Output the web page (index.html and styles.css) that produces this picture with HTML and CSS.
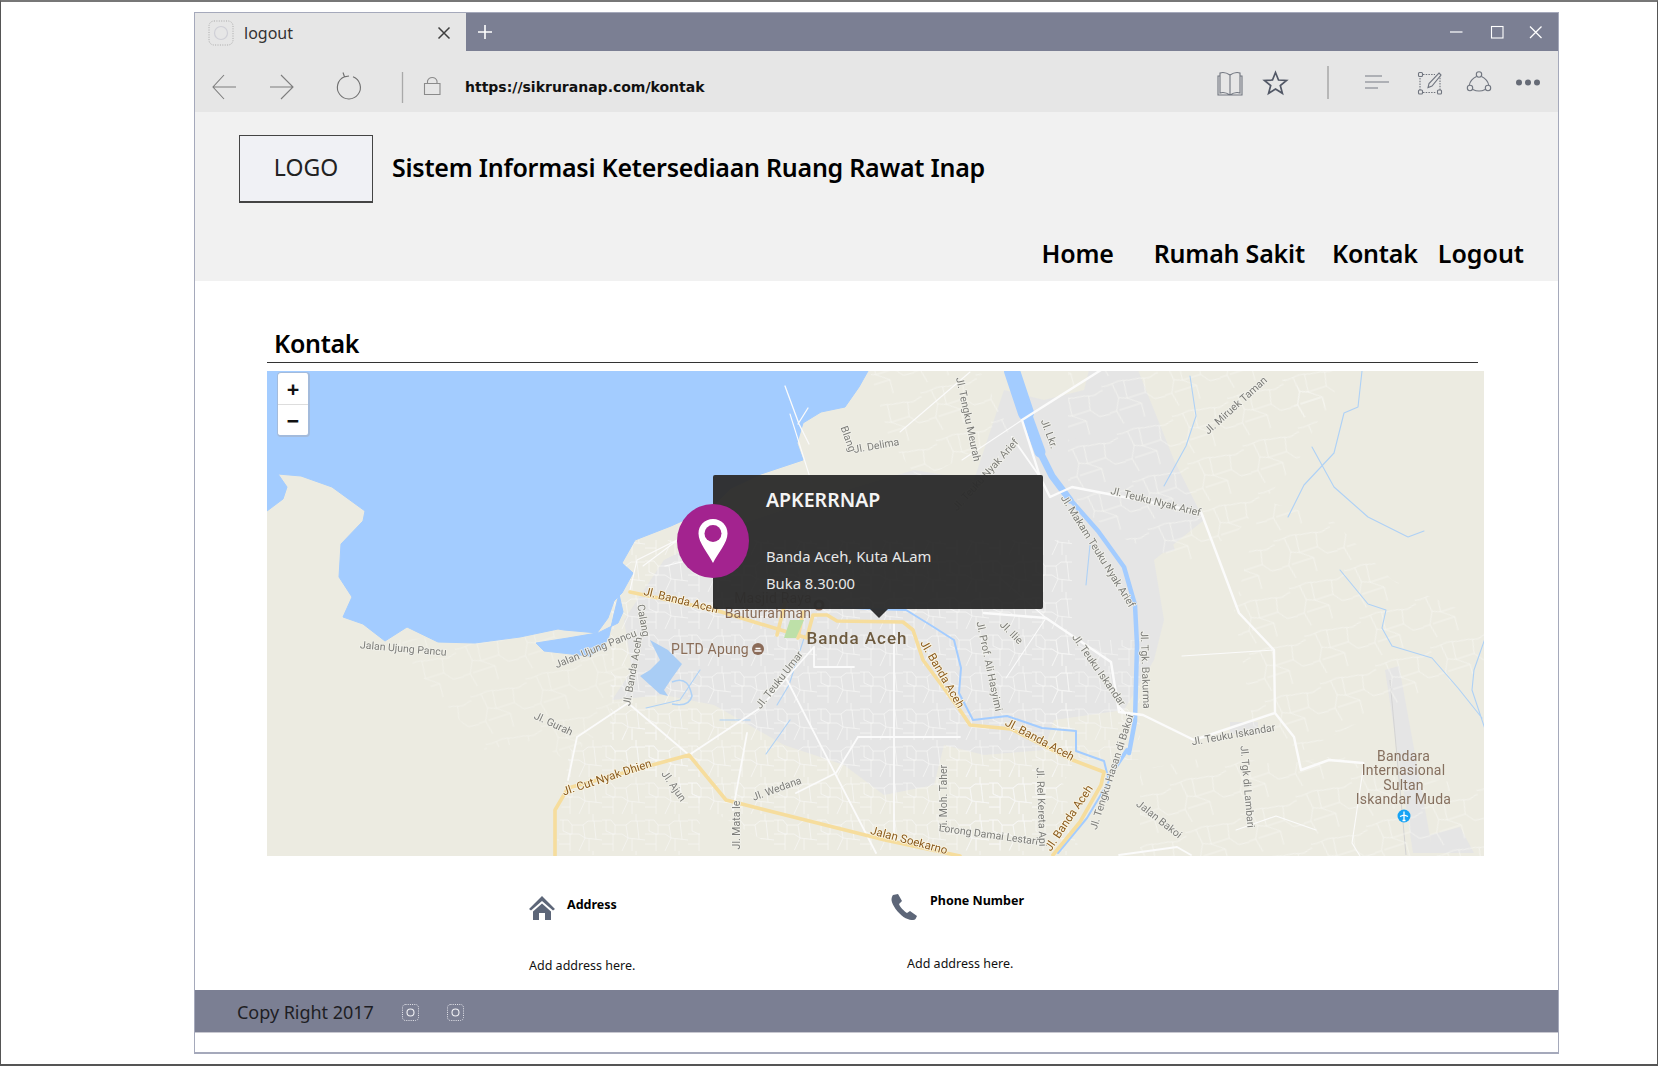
FILE: index.html
```html
<!DOCTYPE html>
<html lang="id">
<head>
<meta charset="utf-8">
<title>logout</title>
<link rel="stylesheet" href="styles.css">
</head>
<body>
<div class="frame">
<div class="window">
  <div class="tabbar">
    <div class="tab">
      <svg class="tab-icon" width="26" height="26" viewBox="0 0 26 26"><rect x="1" y="1" width="24" height="24" rx="5" fill="none" stroke="#a9a9a9" stroke-dasharray="1 1.4"/><circle cx="13" cy="13" r="6.5" fill="none" stroke="#cfcfd6" stroke-width="1.2"/></svg>
      <span class="tab-title">logout</span>
      <svg class="tab-close" width="14" height="14" viewBox="0 0 14 14"><path d="M1.5 1.5l11 11M12.5 1.5l-11 11" stroke="#3f3f3f" stroke-width="1.5" fill="none"/></svg>
    </div>
    <svg class="tab-plus" width="14" height="14" viewBox="0 0 14 14"><path d="M7 0v14M0 7h14" stroke="#fff" stroke-width="1.6" fill="none"/></svg>
    <svg class="win-controls" width="94" height="14" viewBox="0 0 94 14"><path d="M0 7h12.5" stroke="#fff" stroke-width="1.2"/><rect x="41.5" y="1.5" width="11.5" height="11.5" fill="none" stroke="#fff" stroke-width="1.1"/><path d="M80 1.5l11.5 11.5M91.5 1.5L80 13" stroke="#fff" stroke-width="1.3"/></svg>
  </div>
  <div class="toolbar">
    <svg class="tool-left" width="250" height="36" viewBox="0 0 250 36" fill="none" stroke="#7d7d7d" stroke-width="1.1">
      <path d="M18 18H41M29 6L18 18l11 12"/>
      <path d="M98 18H75M86 6l12 12-12 12"/>
      <path d="M158 7.700A11.500 11.500 0 1 1 149.500 7.800M148 3.500l1.500 4.300 4.500-.8" stroke="#6f6f6f"/>
      <path d="M207.500 3v31" stroke="#a9a9a9" stroke-width="1.300"/>
      <path d="M229.500 25.500v-11h15.500v11zM232.500 14.500v-2.500a5 5 0 0 1 9.500 0v2.500" stroke="#8a8a8a"/>
    </svg>
    <span class="url">https://sikruranap.com/kontak</span>
    <svg class="tool-right" width="330" height="36" viewBox="1217 66 330 36" fill="none" stroke="#70757f" stroke-width="1.1">
      <path d="M1230 75c-3-2-7-3-10-2v20c3-1 7 0 10 2 3-2 7-3 10-2V73c-3-1-7 0-10 2zM1230 75v20M1220 76h-2v19h24V76h-2"/>
      <path d="M1275.500 72.500l3 7.500 8 .5-6.200 5 2.100 7.800-6.900-4.300-6.900 4.300 2.100-7.800-6.200-5 8-.5z" stroke="#525866" stroke-width="1.700"/>
      <path d="M1328 66v33" stroke="#a3a3a3" stroke-width="1.400"/>
      <path d="M1365 76h17M1365 82h24M1365 88h13" stroke="#777b84" stroke-width="1.200"/>
      <path d="M1423 74.500h12M1420 78v12M1423 92.500h13M1440 90v-14" stroke-dasharray="1.500 1.200" stroke="#70747c"/>
      <rect x="1418.500" y="72.500" width="4" height="4" rx="1"/><rect x="1418.500" y="90" width="4" height="4" rx="1"/><rect x="1437.500" y="90" width="4" height="4" rx="1"/>
      <path d="M1439 73l2 2-9 11-4 1.500 1-4z"/>
      <circle cx="1479" cy="74.500" r="2.700"/><circle cx="1470" cy="88" r="2.700"/><circle cx="1488" cy="88" r="2.700"/>
      <path d="M1476.500 76.500c-4 2-6.500 5-7.200 8.500M1481.500 76.500c4 2 6.500 5 7.200 8.500M1472.800 89.500c4 2 8.500 2 12.400 0"/>
      <g fill="#666b76" stroke="none"><circle cx="1519" cy="82.500" r="3"/><circle cx="1528" cy="82.500" r="3"/><circle cx="1537" cy="82.500" r="3"/></g>
    </svg>
  </div>
  <header class="site-header">
    <div class="brand">
      <div class="logo">LOGO</div>
      <div class="site-title">Sistem Informasi Ketersediaan Ruang Rawat Inap</div>
    </div>
    <nav class="site-nav">
      <a class="nav-home">Home</a>
      <a class="nav-rs">Rumah Sakit</a>
      <a class="nav-kontak">Kontak</a>
      <a class="nav-logout">Logout</a>
    </nav>
  </header>
  <main class="content">
    <h1 class="page-heading">Kontak</h1>
    <div class="map">
      <svg class="map-svg" width="1217" height="485" viewBox="267 371 1217 485">
        <defs>
          <pattern id="mesh" width="43" height="37" patternUnits="userSpaceOnUse">
            <path d="M0 6h9l4 5h11l5-4h14M4 6v11l7 3v17M13 11v9H0M24 11l2 13 17 2M26 24l-6 13M11 20h9l6 4M34 7V0M35 7l2 18M0 30h11M30 25v12" fill="none" stroke="#f8f8f6" stroke-width=".7"/>
          </pattern>
          <pattern id="mesh2" width="58" height="50" patternUnits="userSpaceOnUse" patternTransform="rotate(-18)">
            <path d="M0 8c8 3 15-2 23 1s13 1 20 4 9-1 15-1M11 9l2 15-6 12 3 14M23 9l-2 18 12 9-1 14M43 13l-3 14 7 9 11 1M13 24l8 3M33 36H10M0 36h7M40 27H21" fill="none" stroke="#f7f7f2" stroke-width=".7"/>
          </pattern>
        </defs>
        <rect x="267" y="371" width="1217" height="485" fill="#ecebe1"/>
        <g fill="#e5e5e5">
          <path d="M612 700l20-30-8-50 40-60 60-30 90-30 100-30 60 10 30-90 40 10 40-10 10-40 40 10 20 50 20 50 30 60-50 40 10 60-10 40-30 50-70 10-10 30-60 5-40-10-10 40-50 10-40-30-60-20-70-40-50-10z"/>
          <path d="M1075 430l40-10 20 40 30 60 10 30-40 10-55-60z"/>
          <path d="M1385 670l14-4 34 187h-20z"/>
          <path d="M1430 835l30-8 14 26h-42z"/>
          <path d="M1230 722h28v12h-28z"/>
        </g>
        <path d="M1390 680l16 175" stroke="#d3d3d3" stroke-width="1" fill="none"/>
        <g>
          <path d="M612 540h460v230l-60 80H780l-70-40-100-60z" fill="url(#mesh)"/>
          <path d="M1068 371h200l60 30-30 60-60 70-50 30-60-20-60-40z" fill="url(#mesh2)"/>
          <path d="M1262 500l70 20 60 60 92 40v50l-60 20-60 30-60 30-50-20-20-120z" fill="url(#mesh2)"/>
          <path d="M1280 371h60l-10 40-30 10z" fill="url(#mesh2)"/>
          <path d="M1140 770l80-15 60 10 60-10 40 20 104 10v71h-344z" fill="url(#mesh2)"/>
          <path d="M395 640l170-10 70 40-20 50-50 40-30-20-50 10-60-70z" fill="url(#mesh2)" opacity=".7"/>
          <path d="M870 371h110l30 60-90 50-30-40z" fill="url(#mesh2)"/>
          <path d="M570 745l80-20 50 50v80H555z" fill="url(#mesh)" opacity=".85"/>
          <path d="M1050 640h90v120h-90z" fill="url(#mesh)" opacity=".8"/>
          <path d="M960 770h100l20 85H960z" fill="url(#mesh)" opacity=".9"/>
        </g>
        <path d="M267 371H868l-9 16-14 20-24 5-18 11-6 20 6 17-42 14-30 14-20 20-40 18-36 14-13 23 11 10-11 20-8 8-6 17-11 15-29 5-32 5 8 8 45 5 14-8 6-12 5-22 5-20 4 18-5 11-20 10-34-3-6-1-38 8-45 6-37-1-31-15-22 14-22-17-20-7 9-20-13-20 2-33 22-23 2-10-33-24-31-11-23-2 9 13-4 12-20 15-20 15z" fill="#a3ccff" stroke="#a3ccff" stroke-linejoin="round"/>
        <path d="M650 640l18 10 14 14-10 14-8 12 4 6-8-2-20-18 10-6 10-10z" fill="#a9cdf5"/>
        <path d="M672 682c14-6 18 4 20 14-2 8-10 10-20 8" fill="none" stroke="#aed1f6" stroke-width="1.500"/>
        <g fill="none" stroke="#a3ccff" stroke-linecap="round" stroke-linejoin="round">
          <path d="M1012 371l14 42" stroke-width="16"/>
          <path d="M1024 408l16 44" stroke-width="11"/>
          <path d="M1038 448l14 28 18 24" stroke-width="7"/>
          <path d="M1068 497l30 34 26 36 11 38 2 40-2 76-6 32" stroke-width="4.500"/>
          <path d="M1127 750l-12 18" stroke-width="4"/>
          <path d="M840 607l30 2 36 1 26 16 22 14 7 28-2 25 14 27 34-4 35 12 34 3 0 20 28 10 5 20-22 37-29 35" stroke-width="2"/>
          <path d="M1190 376l6 40-10 30-22 40M1362 371l-4 36-14 6-10 40-30 32-16 32M1312 447l22 40 34 30 40 20 16-6M1340 570l28 34 18 6-4 18 10 18 40 12 26 30 24 30M1488 630l-14 40-2 20 20 60-4 70M1090 545l-4 40M805 635l-16 50-12 20M790 720l-24 34M700 670l-20 30-34 8M720 720l30 0" stroke="#aed1f6" stroke-width="1.100"/>
        </g>
        <g fill="none" stroke="#fbfbfb" stroke-linejoin="round" stroke-linecap="round">
          <path d="M1101 370l-79 50 18 57 10 20 22-10 129 25 38 101 35 37 1 63 19 24 7 33 28-10 34 3M1275 713l-81 27-51-25-24-3-8-50-65-44-62-5M1119 707l8 8" stroke-width="2.400"/>
          <path d="M894 623v214M689 755l71-47 54-61M787 680l89 173M628 703l61 52M577 737l51-34M577 737l-9 43M747 733l-14 77M814 667h40M814 647v20M858 737h102M858 737l-22 36-40 20M1119 855l58-8 14 8M1040 477l-28-40" stroke-width="1.800"/>
          <path d="M630 590l7-30 44-22M643 566l40-30M665 566l50-12M760 590l60 10M1022 420l-60 40M970 372l-70 60M790 414l22 70M1046 618l-46-40M1046 618l-40 60M1364 763l-12 80 8 13M1236 830l40-14 40 14M1274 650l-92 6" stroke-width="1.100"/>
          <path d="M785 386l14 38 10 20M798 424l10-16" stroke-width="1.300"/>
        </g>
        <g fill="none" stroke="#f6dd9d" stroke-linecap="round" stroke-linejoin="round" stroke-width="3.600">
          <path d="M630 592l85 18 92 28M807 637l6-22 14 0 10 6 66 1 10 8 10 30 37 50 10 15 41 4 59 30 34 13-3 13-21 37-27 33"/>
          <path d="M555 856v-46l13-22 121-33 37 45 159 40 75 16"/>
          <path d="M785 603l-8 32M803 612l-5 26"/>
        </g>
        <path d="M790 620h14l-8 18h-12z" fill="#bde0a8"/>
        <g class="lbl-grey">
          <text transform="translate(403 652) rotate(5)">Jalan Ujung Pancu</text>
          <text transform="translate(597 652) rotate(-22)">Jalan Ujung Pancu</text>
          <text transform="translate(636 672) rotate(-80)">Jl. Banda Aceh</text>
          <text transform="translate(640 621) rotate(80)">Calang</text>
          <text transform="translate(552 727) rotate(25)">Jl. Gurah</text>
          <text transform="translate(782 682) rotate(-52)">Jl. Teuku Umar</text>
          <text transform="translate(671 788) rotate(55)">Jl. Ajun</text>
          <text transform="translate(778 792) rotate(-20)">Jl. Wedana</text>
          <text transform="translate(740 825) rotate(-90)">Jl. Mata Ie</text>
          <text transform="translate(947 798) rotate(-90)">Jl. Moh. Taher</text>
          <text transform="translate(988 838) rotate(8)">Lorong Damai Lestari</text>
          <text transform="translate(1038 807) rotate(88)">Jl. Rel Kereta Api</text>
          <text transform="translate(986 667) rotate(78)">Jl. Prof. Ali Hasyimi</text>
          <text transform="translate(1009 635) rotate(45)">Jl. Ilie</text>
          <text transform="translate(1096 672) rotate(55)">Jl. Teuku Iskandar</text>
          <text transform="translate(1142 670) rotate(88)">Jl. Tgk. Bakurma</text>
          <text transform="translate(1095 553) rotate(58)">Jl. Makam Teuku Nyak Arief</text>
          <text transform="translate(1155 505) rotate(14)">Jl. Teuku Nyak Arief</text>
          <text transform="translate(988 477) rotate(-48)">Jl. Teuku Nyak Arief</text>
          <text transform="translate(1046 435) rotate(70)">Jl. Lkr.</text>
          <text transform="translate(965 420) rotate(78)">Jl. Tengku Meurah</text>
          <text transform="translate(1238 408) rotate(-42)">Jl. Miruek Taman</text>
          <text transform="translate(1234 738) rotate(-10)">Jl. Teuku Iskandar</text>
          <text transform="translate(1244 787) rotate(85)">Jl. Tgk di Lambari</text>
          <text transform="translate(1157 822) rotate(38)">Jalan Bakoi</text>
          <text transform="translate(1115 773) rotate(-72)">Jl. Tengku Hasan di Bakoi</text>
          <text transform="translate(877 449) rotate(-10)">Jl. Delima</text>
          <text transform="translate(845 440) rotate(70)">Blang</text>
        </g>
        <g class="lbl-road">
          <text transform="translate(680 604) rotate(14)">Jl. Banda Aceh</text>
          <text transform="translate(939 676) rotate(60)">Jl. Banda Aceh</text>
          <text transform="translate(608 781) rotate(-18)">Jl. Cut Nyak Dhien</text>
          <text transform="translate(908 844) rotate(15)">Jalan Soekarno</text>
          <text transform="translate(1038 743) rotate(28)">Jl. Banda Aceh</text>
          <text transform="translate(1072 820) rotate(-56)">Jl. Banda Aceh</text>
        </g>
        <text class="lbl-poi" x="773" y="603">Masjid Raya</text>
        <text class="lbl-poi" x="768" y="618">Baiturrahman</text>
        <text class="lbl-city" x="857" y="644">Banda Aceh</text>
        <text class="lbl-poi" x="710" y="654">PLTD Apung</text>
        <circle cx="758" cy="649" r="6" fill="#8b6b58"/><path d="M754.500 651h7M755.500 648.500h5" stroke="#fff" stroke-width="1.300"/>
        <circle cx="819" cy="605" r="5.500" fill="#8b6b58"/><circle cx="819" cy="605" r="2.500" fill="#fff"/>
        <g class="lbl-poi lbl-airport">
          <text x="1403.500" y="761">Bandara</text>
          <text x="1403.500" y="775">Internasional</text>
          <text x="1403.500" y="790">Sultan</text>
          <text x="1403.500" y="804">Iskandar Muda</text>
        </g>
        <circle cx="1404" cy="816" r="6.500" fill="#16a3f5"/><path d="M1404 811.500v9M1400 816.500l4-1.500 4 1.500M1402.500 820.500h3" stroke="#fff" stroke-width="1.300" fill="none"/>
      </svg>
      <div class="zoom-ctl">
        <button class="zoom-btn">+</button>
        <button class="zoom-btn zoom-out">−</button>
      </div>
      <div class="popup">
        <div class="popup-pin">
          <svg width="30" height="44" viewBox="0 0 30 44"><path d="M15 0C6.500 0 .5 6.500.5 14.500.5 24 10 34 15 44c5-10 14.500-20 14.500-29.500C29.500 6.500 23.500 0 15 0z" fill="#fff"/><circle cx="15" cy="14.500" r="8.500" fill="#a3238f"/></svg>
        </div>
        <div class="popup-title">APKERRNAP</div>
        <div class="popup-line">Banda Aceh, Kuta ALam</div>
        <div class="popup-line">Buka 8.30:00</div>
      </div>
    </div>
    <div class="contact-grid">
      <div class="contact-col col-address">
        <div class="contact-head">
          <svg width="26" height="24" viewBox="0 0 26 24"><path d="M13 0L0 13l2 1.500L13 5l11 9.500 2-1.500zM4 15.500V24h6v-7h6v7h6v-8.500L13 7.500z" fill="#5d6678"/></svg>
          <span class="contact-label">Address</span>
        </div>
        <p class="contact-text">Add address here.</p>
      </div>
      <div class="contact-col col-phone">
        <div class="contact-head head-phone">
          <svg width="27" height="26" viewBox="0 0 27 26"><path d="M2 1l5-1 4 7-3 3c1 3 5 7 8 9l3-2 7 5-1.500 3c-2 2-7 1-12-2C7 19 1 11 .5 6 .5 4 1 2 2 1z" fill="#5d6678"/></svg>
          <span class="contact-label">Phone Number</span>
        </div>
        <p class="contact-text text-phone">Add address here.</p>
      </div>
    </div>
  </main>
  <footer class="site-footer">
    <span class="copy">Copy Right 2017</span>
    <svg width="17" height="17" viewBox="0 0 17 17"><rect x=".5" y=".5" width="16" height="16" rx="3" fill="none" stroke="#e8e8ee" stroke-dasharray="1 1.200"/><circle cx="8.500" cy="8.500" r="3.500" fill="none" stroke="#f2f2f5" stroke-width="1.100"/></svg>
    <svg width="17" height="17" viewBox="0 0 17 17"><rect x=".5" y=".5" width="16" height="16" rx="3" fill="none" stroke="#e8e8ee" stroke-dasharray="1 1.200"/><circle cx="8.500" cy="8.500" r="3.500" fill="none" stroke="#f2f2f5" stroke-width="1.100"/></svg>
  </footer>
  <div class="bottom-strip"></div>
</div>
</div>
</body>
</html>
```

FILE: styles.css
```css
* { box-sizing: border-box; }
html, body { margin: 0; padding: 0; background: #fff; }
body { font-family: "Noto Sans", "Open Sans", sans-serif; color: #000; }

.frame {
  width: 1658px; height: 1066px;
  border: 1px solid #555; border-top: 2px solid #777; border-bottom: 2px solid #555;
  padding: 10px 0 0 193px;
  overflow: hidden;
}
.window {
  width: 1365px; height: 1042px;
  display: flex; flex-direction: column;
  border: 1px solid #a5a9bb; border-width: 1px 1px 2px 1px;
  background: #fff;
}

.tabbar { height: 38px; padding-top: 2px; background: #7b7f93; display: flex; align-items: center; flex: none; }
.tab { width: 271px; height: 38px; margin-top: -2px; background: #e6e6e6; display: flex; align-items: center; padding: 2px 0 0 13px; flex: none; }
.tab-icon { flex: none; }
.tab-title { margin-left: 10px; font: 400 16px "Noto Sans", sans-serif; color: #333; flex: 1; }
.tab-close { margin-right: 15px; flex: none; }
.tab-plus { margin-left: 12px; margin-top: -2px; flex: none; }
.win-controls { margin-left: auto; margin-right: 14px; margin-top: -3px; flex: none; }

.toolbar { height: 61px; padding-top: 10px; background: #e6e6e6; display: flex; align-items: center; flex: none; }
.tool-left { flex: none; margin-top: 1px; }
.url { margin-left: 20px; font: 700 14px "DejaVu Sans", sans-serif; color: #111; flex: 1; white-space: nowrap; }
.tool-right { flex: none; margin-right: 11px; margin-top: -5px; }

.site-header { height: 169px; background: #f1f1f1; flex: none; display: flex; flex-direction: column; }
.brand { display: flex; align-items: center; padding: 23px 0 0 44px; }
.logo { width: 134px; height: 68px; background: #f0f1f5; border: 1px solid #444; border-bottom-width: 2px; display: flex; align-items: center; justify-content: center; font-size: 23px; line-height: 60px; padding-bottom: 3px; color: #222; }
.site-title { margin-left: 19px; margin-top: -4px; font-size: 25px; font-weight: 600; letter-spacing: -.25px; color: #000; white-space: nowrap; }
.site-nav { display: flex; justify-content: flex-end; margin-top: 33px; padding-right: 34px; font-size: 25px; font-weight: 600; letter-spacing: -.2px; white-space: nowrap; }
.nav-rs { margin-left: 40px; }
.nav-kontak { margin-left: 27px; }
.nav-logout { margin-left: 20px; letter-spacing: 0; }

.content { flex: 1; display: flex; flex-direction: column; padding: 0 0 0 72px; }
.page-heading { margin: 44px 0 0; width: 1211px; height: 38px; padding-left: 7px; font-size: 25px; font-weight: 600; letter-spacing: -.3px; line-height: 37px; border-bottom: 1px solid #333; }
.map { position: relative; margin-top: 8px; width: 1217px; height: 485px; overflow: hidden; flex: none; }
.map-svg { display: block; filter: blur(.35px); }
.map-svg text { font-family: Roboto, sans-serif; text-anchor: middle; }
.lbl-grey text { font-size: 10.5px; fill: #7c7c78; paint-order: stroke; stroke: #f2f2ec; stroke-width: 1.5px; }
.lbl-road text { font-size: 11.5px; fill: #8a5a1c; paint-order: stroke; stroke: #fbf6e4; stroke-width: 1.6px; }
.lbl-poi { font-size: 14px; fill: #8a6d58; letter-spacing: .2px; }
.lbl-city { font-size: 17px; font-weight: 500; fill: #6d5a3e; letter-spacing: 1px; }
.lbl-airport text { font-size: 14px; fill: #86705f; }

.zoom-ctl { position: absolute; left: 10px; top: 1px; width: 33px; height: 65px; background: #fff; border: 2px solid #a3bbdc; border-top-width: 1px; border-left-width: 1px; border-radius: 4px; display: flex; flex-direction: column; }
.zoom-btn { flex: 1; border: 0; padding: 0; background: transparent; font: 700 22px/1 "Noto Sans", sans-serif; color: #111; }
.zoom-out { border-top: 1px solid #ddd; }

.popup { position: absolute; left: 446px; top: 104px; width: 330px; height: 134px; background: rgba(44,44,44,.96); border-radius: 2px; padding: 11px 0 0 53px; color: #eee; }
.popup::after { content: ""; position: absolute; left: 157px; top: 100%; border: 9px solid transparent; border-top-color: rgba(44,44,44,.96); border-bottom: 0; }
.popup-pin { position: absolute; left: -36px; top: 29px; width: 72px; height: 74px; border-radius: 50%; background: #a3238f; display: flex; align-items: center; justify-content: center; }
.popup-title { font-size: 19.5px; font-weight: 600; line-height: 28px; color: #f4f4f4; margin-bottom: 29px; }
.popup-line { font-size: 14.8px; line-height: 27px; color: #e8e8e8; }

.contact-grid { display: flex; flex: 1; padding-left: 262px; font-size: 12px; }
.contact-col { width: 362px; }
.col-address { padding-top: 40px; }
.col-phone { padding-top: 38px; }
.contact-head { display: flex; align-items: center; gap: 12px; height: 24px; }
.head-phone { align-items: flex-start; gap: 12px; height: 26px; }
.contact-label { font-size: 12.5px; font-weight: 700; white-space: nowrap; margin-top: -8px; }
.head-phone .contact-label { margin-top: -2px; }
.contact-text { margin: 37px 0 0; font-size: 12.5px; color: #111; white-space: nowrap; }
.text-phone { margin: 35px 0 0 16px; }

.site-footer { height: 43px; flex: none; background: #7b7f93; display: flex; align-items: center; padding: 2px 0 0 42px; border-bottom: 1px solid #c8c8d0; }
.copy { font-size: 18px; color: #1e1e24; margin-right: 28px; letter-spacing: -.03px; }
.site-footer svg { margin-right: 28px; }
.bottom-strip { height: 19px; flex: none; background: #fff; }
```
